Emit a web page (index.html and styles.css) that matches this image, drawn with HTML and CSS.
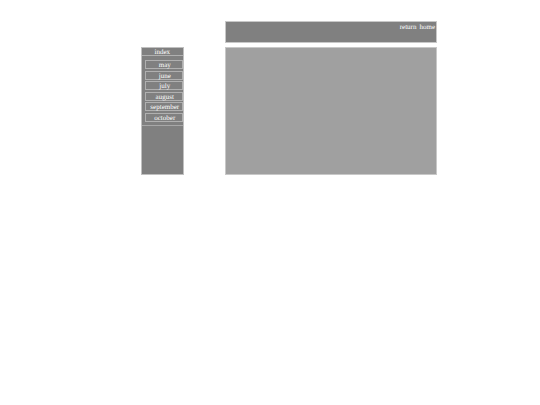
FILE: index.html
```
<!DOCTYPE html>
<html>
  <head>
    <meta charset="utf-8">
    <title>index</title>
    <link rel="stylesheet" href="styles.css">
  </head>
  <body>
    <div class="page">
      <header class="top">
        <a href="#return">return</a>
        <a href="#home">home</a>
      </header>
      <nav class="menu">
        <a class="title" href="#index">index</a>
        <ul>
          <li><a href="#may">may</a></li>
          <li><a href="#june">june</a></li>
          <li><a href="#july">july</a></li>
          <li><a href="#august">august</a></li>
          <li><a href="#september">september</a></li>
          <li><a href="#october">october</a></li>
        </ul>
      </nav>
      <main class="content"></main>
    </div>
  </body>
</html>
```

FILE: styles.css
```
* {
  box-sizing: border-box;
}
body {
  margin: 0;
  background: #fff;
  color: #fff;
  font-family: "Liberation Serif", "Times New Roman", serif;
  font-size: 7px;
  line-height: 7px;
  text-rendering: geometricPrecision;
}
a {
  color: #fff;
  text-decoration: none;
}

/* narrow menu column, wide content column */
.page {
  display: grid;
  grid-template-columns: 1fr 5fr;
  column-gap: 41px;
  row-gap: 4px;
  padding: 21px 103px 0 141px;
}

.top {
  grid-column: 2;
  display: flex;
  justify-content: flex-end;
  gap: 3px;
  min-height: 22px;
  padding: 2px 1px;
  background: #808080;
  border: 1px solid #c8c8c8;
}

.menu {
  min-width: 0;
  min-height: 128px;
  background: #808080;
  border: 1px solid #c0c0c0;
}
.menu .title {
  display: block;
  height: 7px;
  line-height: 8px;
  text-align: center;
}
.menu ul {
  display: flex;
  flex-direction: column;
  justify-content: space-between;
  min-height: 71px;
  margin: 0;
  padding: 4px 0 3px 3px;
  list-style: none;
  border-top: 1px solid #b0b0b0;
  border-bottom: 1px solid #a8a8a8;
}
.menu li {
  height: 9px;
  border: 1px solid #b0b0b0;
  text-align: center;
}
.menu li a {
  display: block;
  padding-left: 2px;
  line-height: 8px;
}

.content {
  background: #a0a0a0;
  border: 1px solid #c8c8c8;
}
```
